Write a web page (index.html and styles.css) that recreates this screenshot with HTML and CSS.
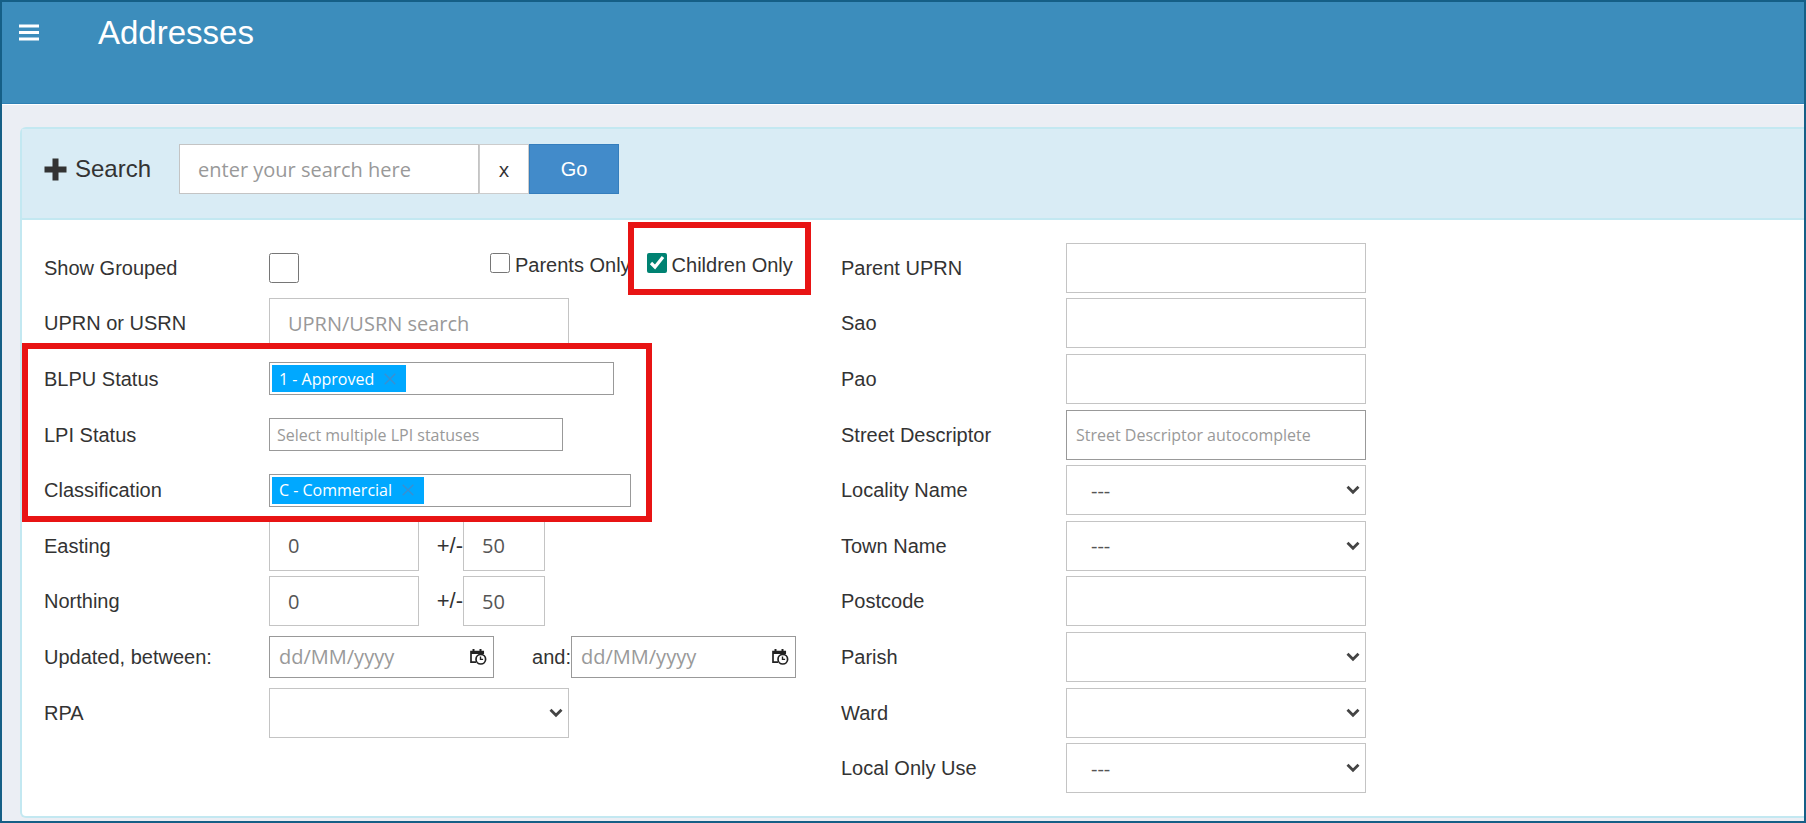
FILE: index.html
```html
<!DOCTYPE html>
<html lang="en">
<head>
 <meta charset="utf-8">
 <title>Addresses</title>
 <link rel="stylesheet" href="styles.css">
</head>
<body>
 <!-- shared icons -->
 <svg class="icon-defs" aria-hidden="true">
  <symbol id="icon-chevron" viewBox="0 0 14 10">
   <path d="M1.5 1.8 L7 7.3 L12.5 1.8" fill="none" stroke="#444" stroke-width="2.8"/>
  </symbol>
  <symbol id="icon-calendar" viewBox="0 0 18 18">
   <path d="M2 3h12v3H2z" fill="#222"/>
   <path d="M4.5 1v3M11.5 1v3" stroke="#222" stroke-width="2"/>
   <path d="M7 14.2H2V3.5h12.2V6" fill="none" stroke="#222" stroke-width="1.7"/>
   <circle cx="11.8" cy="11.2" r="4.8" fill="#fff" stroke="#222" stroke-width="1.7"/>
   <path d="M11.5 8.4v3h2.6" fill="none" stroke="#222" stroke-width="1.4"/>
  </symbol>
  <symbol id="icon-cross" viewBox="0 0 12 12">
   <path d="M0.7 0.7 L11.3 11.3 M11.3 0.7 L0.7 11.3" fill="none" stroke="#3a8fd0" stroke-width="1.4"/>
  </symbol>
 </svg>

 <!-- top bar -->
 <header class="top-bar">
  <button class="menu-button" type="button" aria-label="Menu">
   <svg width="20" height="17" viewBox="0 0 20 17"><path d="M0 2h20M0 8.5h20M0 15h20" stroke="#fff" stroke-width="3"/></svg>
  </button>
  <h1 class="page-title">Addresses</h1>
 </header>

 <main class="content">
  <form class="panel">
   <!-- quick search -->
   <div class="panel-heading">
    <label class="search-label" for="search">
     <svg width="23" height="23" viewBox="0 0 23 23"><path d="M8.5 0.5h6v8h8v6h-8v8h-6v-8h-8v-6h8z" fill="#333"/></svg>
     Search
    </label>
    <div class="search-group">
     <input class="field" id="search" type="text" placeholder="enter your search here">
     <button class="clear-button" type="button">x</button>
     <button class="go-button" type="button">Go</button>
    </div>
   </div>

   <!-- search filters -->
   <div class="panel-body">
    <div class="filters filters-left">
     <div class="row">
      <label class="row-label" for="grouped">Show Grouped</label>
      <input class="check-large" id="grouped" type="checkbox">
      <div class="check-group">
       <input class="check" id="parents" type="checkbox">
       <label for="parents">Parents Only</label>
      </div>
      <div class="check-group check-children">
       <input class="check" id="children" type="checkbox" checked>
       <label for="children">Children Only</label>
      </div>
     </div>
     <div class="row">
      <label class="row-label" for="uprn">UPRN or USRN</label>
      <input class="field" id="uprn" type="text" placeholder="UPRN/USRN search">
     </div>
     <div class="row">
      <label class="row-label" for="blpu">BLPU Status</label>
      <div class="multi">
       <span class="chip">1 - Approved <button class="chip-remove" type="button" aria-label="Remove"><svg width="12" height="12"><use href="#icon-cross"/></svg></button></span>
       <input class="multi-input" id="blpu" type="text">
      </div>
     </div>
     <div class="row">
      <label class="row-label" for="lpi">LPI Status</label>
      <div class="multi multi-empty">
       <input class="multi-input" id="lpi" type="text" placeholder="Select multiple LPI statuses">
      </div>
     </div>
     <div class="row">
      <label class="row-label" for="classification">Classification</label>
      <div class="multi multi-wide">
       <span class="chip">C - Commercial <button class="chip-remove" type="button" aria-label="Remove"><svg width="12" height="12"><use href="#icon-cross"/></svg></button></span>
       <input class="multi-input" id="classification" type="text">
      </div>
     </div>
     <div class="row">
      <label class="row-label" for="easting">Easting</label>
      <input class="field field-medium" id="easting" type="text" value="0">
      <label class="between between-range" for="easting-range">+/-</label>
      <input class="field field-small" id="easting-range" type="text" value="50">
     </div>
     <div class="row">
      <label class="row-label" for="northing">Northing</label>
      <input class="field field-medium" id="northing" type="text" value="0">
      <label class="between between-range" for="northing-range">+/-</label>
      <input class="field field-small" id="northing-range" type="text" value="50">
     </div>
     <div class="row">
      <label class="row-label" for="updated-from">Updated, between:</label>
      <div class="date">
       <input class="date-input" id="updated-from" type="text" placeholder="dd/MM/yyyy">
       <svg width="18" height="18"><use href="#icon-calendar"/></svg>
      </div>
      <label class="between between-dates" for="updated-to">and:</label>
      <div class="date">
       <input class="date-input" id="updated-to" type="text" placeholder="dd/MM/yyyy">
       <svg width="18" height="18"><use href="#icon-calendar"/></svg>
      </div>
     </div>
     <div class="row">
      <label class="row-label" for="rpa">RPA</label>
      <div class="select">
       <select class="field" id="rpa"><option></option></select>
       <svg class="select-arrow"><use href="#icon-chevron"/></svg>
      </div>
     </div>

     <!-- red outlines round the filters in use -->
     <div class="highlight highlight-children"></div>
     <div class="highlight highlight-status"></div>
    </div>

    <div class="filters filters-right">
     <div class="row">
      <label class="row-label" for="parent-uprn">Parent UPRN</label>
      <input class="field" id="parent-uprn" type="text">
     </div>
     <div class="row">
      <label class="row-label" for="sao">Sao</label>
      <input class="field" id="sao" type="text">
     </div>
     <div class="row">
      <label class="row-label" for="pao">Pao</label>
      <input class="field" id="pao" type="text">
     </div>
     <div class="row">
      <label class="row-label" for="street">Street Descriptor</label>
      <input class="field field-auto" id="street" type="text" placeholder="Street Descriptor autocomplete">
     </div>
     <div class="row">
      <label class="row-label" for="locality">Locality Name</label>
      <div class="select">
       <select class="field" id="locality"><option>---</option></select>
       <svg class="select-arrow"><use href="#icon-chevron"/></svg>
      </div>
     </div>
     <div class="row">
      <label class="row-label" for="town">Town Name</label>
      <div class="select">
       <select class="field" id="town"><option>---</option></select>
       <svg class="select-arrow"><use href="#icon-chevron"/></svg>
      </div>
     </div>
     <div class="row">
      <label class="row-label" for="postcode">Postcode</label>
      <input class="field" id="postcode" type="text">
     </div>
     <div class="row">
      <label class="row-label" for="parish">Parish</label>
      <div class="select">
       <select class="field" id="parish"><option></option></select>
       <svg class="select-arrow"><use href="#icon-chevron"/></svg>
      </div>
     </div>
     <div class="row">
      <label class="row-label" for="ward">Ward</label>
      <div class="select">
       <select class="field" id="ward"><option></option></select>
       <svg class="select-arrow"><use href="#icon-chevron"/></svg>
      </div>
     </div>
     <div class="row">
      <label class="row-label" for="local">Local Only Use</label>
      <div class="select">
       <select class="field" id="local"><option>---</option></select>
       <svg class="select-arrow"><use href="#icon-chevron"/></svg>
      </div>
     </div>
    </div>
   </div>
  </form>
 </main>
</body>
</html>
```
FILE: styles.css
```css
* {
 box-sizing: border-box;
}

body {
 display: flex;
 flex-direction: column;
 min-height: 100vh;
 margin: 0;
 border: 2px solid #155f86;
 background-color: #ebeef4;
 color: #333;
 font-family: "Liberation Sans", Arial, sans-serif;
 font-size: 20px;
 line-height: 24px;
}

input,
select,
button {
 margin: 0;
 border-radius: 0;
 font-family: "Open Sans", "Segoe UI", sans-serif;
 font-size: 20px;
}

.icon-defs {
 position: absolute;
 width: 0;
 height: 0;
}

/* top bar */
.top-bar {
 display: flex;
 align-items: flex-start;
 gap: 59px;
 height: 102px;
 padding: 11px 17px;
 border-bottom: 1px solid #2f81b5;
 background-color: #3c8dbc;
 box-shadow: 0 1px 0 #fff;
}

.menu-button {
 display: flex;
 padding: 11px 0;
 border: 0;
 background: none;
}

.page-title {
 margin: 0;
 color: #fff;
 font-size: 33px;
 font-weight: normal;
 line-height: 40px;
}

/* search panel */
.content {
 display: flex;
 flex: 1;
 padding: 23px 0 3px 18px;
}

.panel {
 display: flex;
 flex: 1;
 flex-direction: column;
 border: 2px solid #c3e8f1;
 border-right: 0;
 border-radius: 6px 0 0 6px;
 background-color: #fff;
}

.panel-heading {
 display: flex;
 align-items: flex-start;
 gap: 28px;
 padding: 15px 22px 24px;
 border-bottom: 2px solid #c3e8f1;
 background-color: #d9ecf5;
}

.search-label {
 display: flex;
 align-items: center;
 gap: 8px;
 height: 50px;
 font-size: 24px;
}

.search-group {
 display: flex;
}

.clear-button {
 width: 50px;
 border: 1px solid #ccc;
 background-color: #fff;
 color: #333;
}

.go-button {
 width: 90px;
 border: 1px solid #357ebd;
 background-color: #428bca;
 color: #fff;
 font-family: "Liberation Sans", Arial, sans-serif;
}

/* two columns of filters */
.panel-body {
 display: flex;
 flex: 1;
 padding: 20px 22px;
}

.filters {
 display: grid;
 grid-template-rows: repeat(10, minmax(50px, 1fr));
}

.filters-left {
 position: relative;
 flex: 0 0 797px;
}

.filters-right {
 flex: 1;
}

.row {
 display: flex;
 align-items: center;
}

.row-label {
 width: 225px;
}

/* form controls */
.field {
 width: 300px;
 height: 50px;
 padding: 0 18px;
 border: 1px solid #c4c4c4;
 background-color: #fff;
 color: #555;
}

.field::placeholder,
.multi-input::placeholder,
.date-input::placeholder {
 color: #999;
 opacity: 1;
}

.field-medium {
 width: 150px;
}

.field-small {
 width: 82px;
}

.filters-right .field-auto {
 padding: 0 9px;
 border-color: #999;
 font-size: 16px;
}

.between {
 width: 44px;
 text-align: right;
}

.between-range {
 font-size: 22px;
}

.between-dates {
 width: 77px;
}

.select {
 position: relative;
}

.select .field {
 padding: 0 24px;
 appearance: none;
}

.select-arrow {
 position: absolute;
 top: 20px;
 right: 6px;
 width: 14px;
 height: 10px;
 pointer-events: none;
}

.check-large {
 width: 30px;
 height: 30px;
 margin-right: 191px;
}

.check-group {
 display: flex;
 align-items: flex-end;
 gap: 5px;
 padding-bottom: 6px;
}

.check-children {
 margin-left: 16px;
}

.check {
 width: 20px;
 height: 20px;
 margin-bottom: 4px;
 accent-color: #008272;
}

/* multi select boxes */
.multi {
 display: flex;
 width: 345px;
 height: 33px;
 padding: 2px;
 border: 1px solid #999;
 background-color: #fff;
}

.multi-empty {
 width: 294px;
}

.multi-wide {
 width: 362px;
}

.chip {
 display: flex;
 align-items: center;
 gap: 10px;
 padding: 0 10px 0 7px;
 background-color: #00a8ff;
 color: #fff;
 font-family: "Open Sans", "Segoe UI", sans-serif;
 font-size: 16px;
 white-space: nowrap;
}

.chip-remove {
 display: flex;
 padding: 0;
 border: 0;
 background: none;
}

.multi-input {
 flex: 1;
 min-width: 0;
 padding: 0 5px;
 border: 0;
 outline: 0;
 background: none;
 font-size: 16px;
}

/* date boxes */
.date {
 display: flex;
 align-items: center;
 width: 225px;
 height: 42px;
 padding: 0 6px 0 9px;
 border: 1px solid #999;
 background-color: #fff;
}

.date-input {
 flex: 1;
 min-width: 0;
 padding: 0;
 border: 0;
 outline: 0;
 background: none;
}

/* red outlines */
.highlight {
 position: absolute;
 border: 6px solid #e81414;
 pointer-events: none;
}

.highlight-children {
 top: -18px;
 left: 584px;
 width: 183px;
 height: 73px;
}

.highlight-status {
 top: 103px;
 left: -22px;
 width: 630px;
 height: 179px;
}
```
